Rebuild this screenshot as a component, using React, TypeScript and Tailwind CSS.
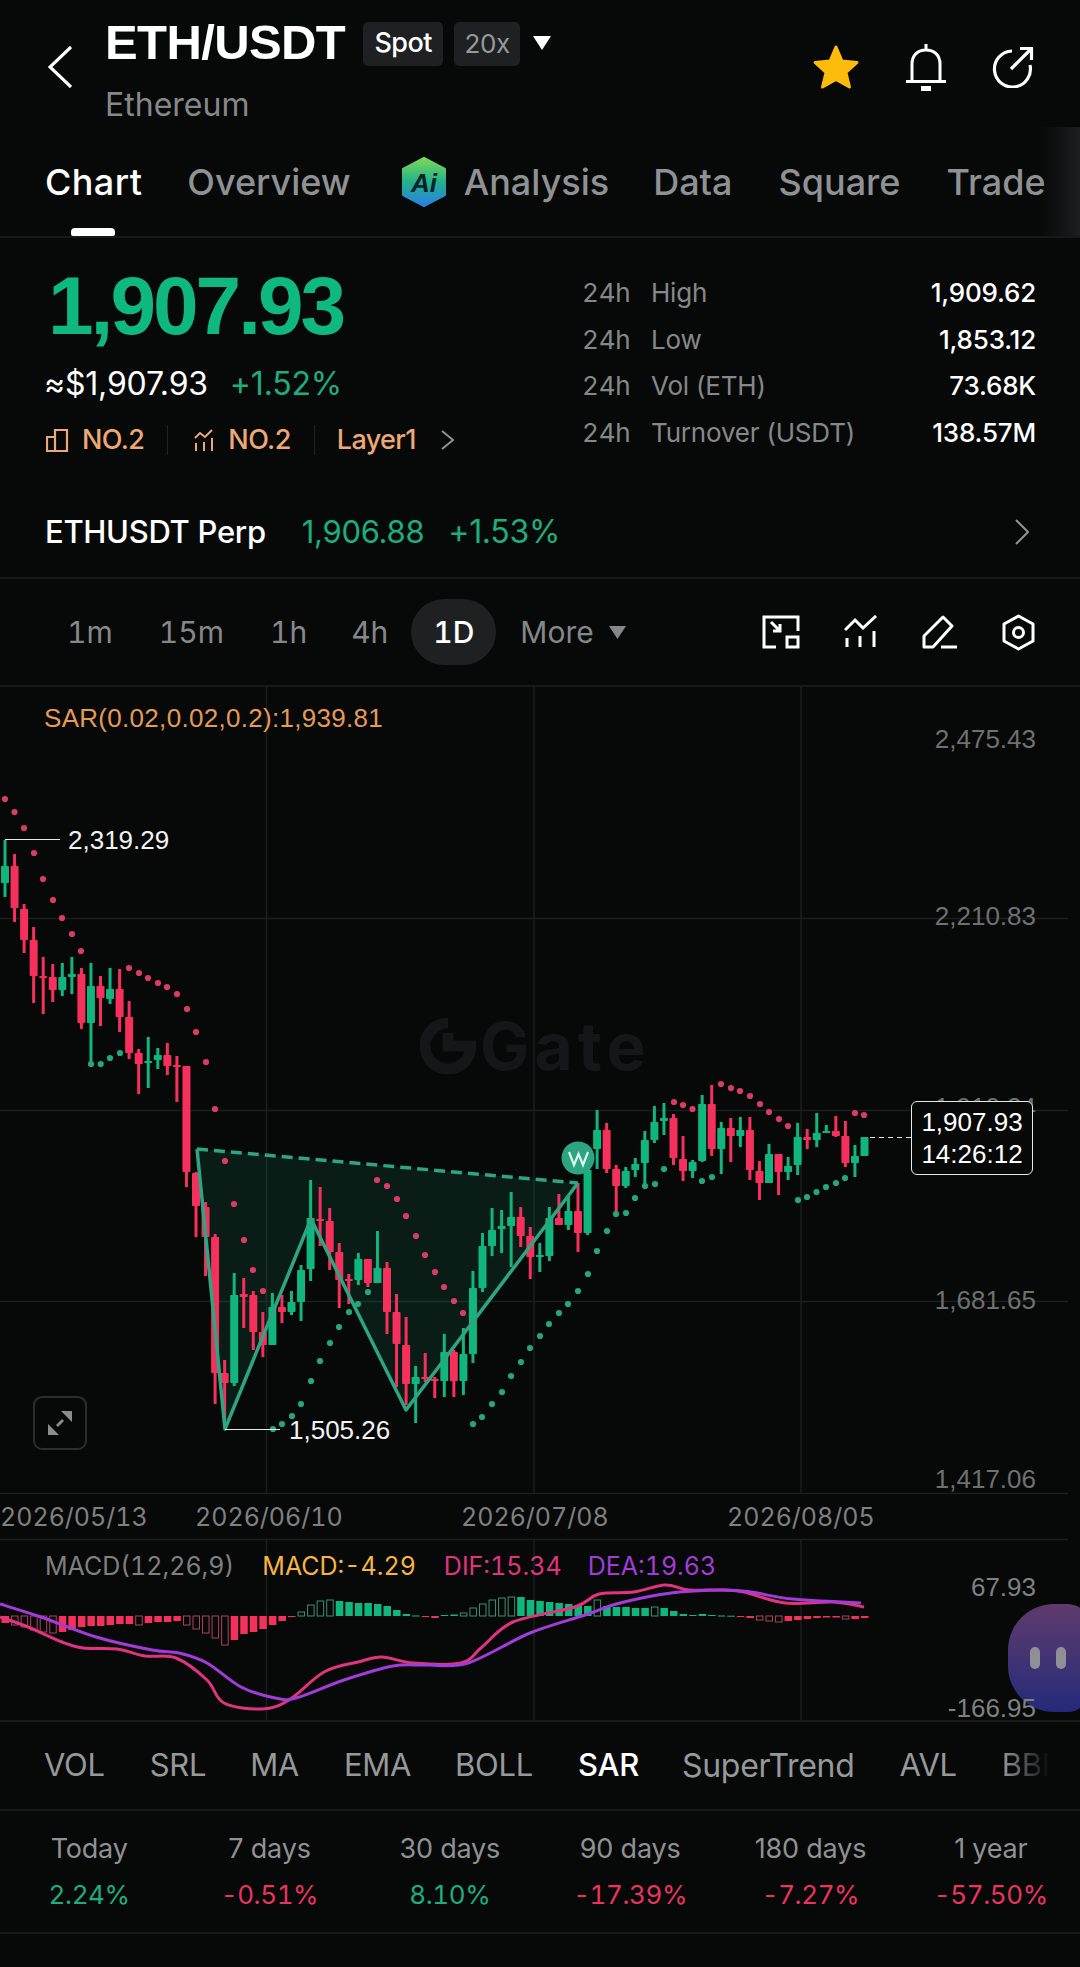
import { Fragment } from "react";

const UP = "#10b67e";
const DOWN = "#f6305c";

// wickTop, bodyTop, bodyBottom, wickBottom, 1 = green
const CANDLES: number[][] = [
  [840, 866, 883, 897, 1], [854, 866, 908, 922, 0], [904, 909, 940, 953, 0], [927, 940, 976, 1003, 0],
  [957, 976, 977, 1014, 0], [964, 977, 990, 1002, 0], [963, 977, 990, 996, 1], [957, 974, 977, 994, 1],
  [968, 974, 1023, 1029, 0], [963, 986, 1023, 1064, 1], [976, 986, 998, 1026, 0], [968, 989, 999, 1004, 1],
  [969, 989, 1017, 1032, 0], [1001, 1017, 1053, 1059, 0], [1049, 1053, 1064, 1094, 0], [1037, 1061, 1063, 1088, 1],
  [1048, 1055, 1060, 1069, 1], [1043, 1055, 1066, 1075, 0], [1056, 1065, 1067, 1102, 0], [1066, 1066, 1172, 1187, 0],
  [1172, 1173, 1206, 1237, 0], [1202, 1207, 1237, 1276, 0], [1234, 1237, 1373, 1404, 0], [1360, 1373, 1383, 1420, 0],
  [1273, 1295, 1383, 1386, 1], [1278, 1294, 1297, 1328, 0], [1291, 1295, 1332, 1350, 0], [1312, 1332, 1345, 1357, 0],
  [1293, 1307, 1345, 1345, 1], [1295, 1307, 1312, 1323, 0], [1291, 1302, 1312, 1315, 1], [1265, 1270, 1302, 1321, 1],
  [1180, 1218, 1269, 1281, 1], [1187, 1219, 1221, 1246, 0], [1208, 1221, 1252, 1270, 0], [1243, 1252, 1280, 1308, 0],
  [1274, 1279, 1281, 1304, 0], [1253, 1259, 1280, 1285, 1], [1259, 1259, 1283, 1287, 0], [1231, 1268, 1283, 1283, 1],
  [1262, 1268, 1312, 1334, 0], [1294, 1312, 1344, 1387, 0], [1317, 1345, 1384, 1405, 0], [1366, 1377, 1384, 1423, 1],
  [1353, 1377, 1379, 1382, 0], [1377, 1379, 1381, 1398, 0], [1334, 1352, 1381, 1397, 1], [1350, 1352, 1381, 1397, 0],
  [1328, 1354, 1381, 1395, 1], [1271, 1288, 1354, 1363, 1], [1233, 1246, 1288, 1292, 1], [1208, 1230, 1246, 1256, 1],
  [1210, 1226, 1229, 1253, 1], [1192, 1217, 1226, 1267, 1], [1207, 1217, 1236, 1247, 0], [1227, 1236, 1257, 1279, 0],
  [1243, 1255, 1257, 1272, 1], [1207, 1218, 1256, 1261, 1], [1194, 1218, 1225, 1225, 0], [1195, 1211, 1225, 1230, 1],
  [1183, 1211, 1233, 1252, 0], [1163, 1170, 1233, 1235, 1], [1110, 1130, 1149, 1169, 1], [1123, 1130, 1169, 1173, 0],
  [1165, 1169, 1186, 1213, 0], [1167, 1171, 1186, 1188, 1], [1158, 1164, 1170, 1177, 1], [1131, 1140, 1163, 1185, 1],
  [1106, 1122, 1140, 1143, 1], [1103, 1118, 1121, 1135, 1], [1114, 1118, 1158, 1165, 0], [1136, 1159, 1171, 1181, 0],
  [1160, 1162, 1171, 1178, 1], [1095, 1104, 1161, 1162, 1], [1085, 1104, 1149, 1156, 0], [1122, 1128, 1149, 1174, 1],
  [1118, 1128, 1136, 1162, 0], [1117, 1130, 1136, 1147, 1], [1117, 1130, 1170, 1180, 0], [1161, 1171, 1183, 1200, 0],
  [1144, 1154, 1183, 1183, 1], [1154, 1154, 1172, 1195, 0], [1157, 1166, 1172, 1180, 1], [1123, 1137, 1165, 1175, 1],
  [1129, 1137, 1140, 1149, 0], [1113, 1133, 1140, 1147, 1], [1125, 1131, 1132, 1133, 1], [1116, 1131, 1136, 1137, 0],
  [1121, 1136, 1163, 1167, 0], [1145, 1156, 1163, 1177, 1], [1137, 1137, 1156, 1156, 1],
];

const RED_DOTS = [
  [5, 799], [14.5, 812], [24, 828], [34, 853], [43, 879], [53, 900], [62, 918], [72, 934], [81, 951],
  [129, 968], [139, 973], [148, 978], [158, 983], [167, 987], [177, 994], [187, 1009], [196, 1032], [206, 1062],
  [215, 1109], [225, 1161], [234, 1204], [244, 1240], [253, 1270], [263, 1291],
  [377, 1180], [387, 1186], [397, 1199], [406, 1216], [416, 1236], [425, 1255], [435, 1272], [444, 1287], [454, 1301], [463, 1313],
  [674, 1102], [683, 1105], [692.5, 1109],
  [721, 1084], [731, 1088], [740, 1091], [750, 1096], [760, 1104], [769, 1112], [779, 1119], [788, 1126],
  [855, 1113], [864, 1115],
];

const GREEN_DOTS = [
  [91, 1064], [100.7, 1064], [110, 1058], [120, 1053],
  [273, 1429], [282, 1424], [292, 1416], [301, 1404], [311, 1381], [320, 1361], [330, 1343], [339, 1327], [349, 1312], [358, 1304], [368, 1292],
  [473, 1424], [482, 1417], [492, 1404], [502, 1392], [511, 1376], [521, 1362], [530, 1348], [540, 1336], [549, 1324], [559, 1313], [568, 1304], [578, 1291], [588, 1274], [597, 1251],
  [607, 1231], [616, 1214], [626, 1213], [635, 1198], [645, 1186], [655, 1184], [664, 1169],
  [702, 1181], [712, 1177],
  [798, 1200], [807, 1197], [816.5, 1192], [826, 1187], [836, 1183], [845, 1178],
];

// macd histogram, px above / below the zero line
const HIST = [
  -7, -9, -11, -14, -16, -17, -16, -14, -11, -10, -10, -9, -8, -8, -9, -7, -6, -6, -5, -9, -13, -17, -22, -29, -24, -18, -16, -13, -9, -5, -1,
  4, 11, 15, 16, 15, 14, 13, 13, 12, 10, 6, 2, 0.5, -1, -2, 1, 1.5, 3, 8, 12, 16, 18, 19, 19, 16, 15, 14, 13, 12, 11, 10, 16, 10, 9, 9, 8, 8, 9, 8, 5, 2, 1, 2, 1, 0.5, 0.3,
  -1, -2, -4, -5, -6, -5, -4, -3, -2, -1.5, -1.5, -3, -3, -2,
];

const DIF = [[0, 1617], [28, 1627], [62, 1642], [83, 1648], [117, 1649], [145, 1656], [176, 1658], [207, 1680], [224, 1703], [262, 1709], [289, 1700], [324, 1672], [358, 1662], [382, 1657], [413, 1663], [461, 1663], [482, 1647], [513, 1622], [575, 1607], [599, 1594], [634, 1592], [665, 1585], [689, 1590], [723, 1590], [744, 1592], [785, 1603], [833, 1602], [864, 1607]];
const DEA = [[0, 1604], [41, 1617], [96, 1637], [152, 1650], [179, 1653], [207, 1663], [241, 1687], [275, 1698], [296, 1698], [344, 1680], [393, 1666], [427, 1665], [468, 1663], [530, 1633], [585, 1615], [620, 1603], [671, 1593], [723, 1590], [751, 1592], [792, 1599], [861, 1603]];

// catmull-rom through the points, the real lines are smooth
function smooth(pts: number[][]) {
  let d = `M${pts[0][0]} ${pts[0][1]}`;
  for (let i = 0; i < pts.length - 1; i++) {
    const p0 = pts[Math.max(i - 1, 0)];
    const p1 = pts[i];
    const p2 = pts[i + 1];
    const p3 = pts[Math.min(i + 2, pts.length - 1)];
    const c1x = p1[0] + (p2[0] - p0[0]) / 6;
    const c1y = p1[1] + (p2[1] - p0[1]) / 6;
    const c2x = p2[0] - (p3[0] - p1[0]) / 6;
    const c2y = p2[1] - (p3[1] - p1[1]) / 6;
    d += `C${c1x} ${c1y} ${c2x} ${c2y} ${p2[0]} ${p2[1]}`;
  }
  return d;
}

function Chart() {
  return (
    <svg className="absolute inset-0" width={1080} height={1033} viewBox="0 687 1080 1033" fill="none">
      {/* grid */}
      {[918, 1110, 1301, 1493, 1539].map((y) => (
        <line key={y} x1={0} x2={1068} y1={y + 0.5} y2={y + 0.5} stroke="#1b1d1e" strokeWidth={1.5} />
      ))}
      {[266.5, 534, 801].map((x) => (
        <Fragment key={x}>
          <line x1={x} x2={x} y1={687} y2={1493} stroke="#1b1d1e" strokeWidth={1.5} />
          <line x1={x} x2={x} y1={1539} y2={1720} stroke="#1b1d1e" strokeWidth={1.5} />
        </Fragment>
      ))}

      {/* w pattern fill */}
      <polygon points="197,1149 225,1429 311,1219 406,1410 578,1183" fill="#15a878" fillOpacity={0.13} />

      {/* candles */}
      {CANDLES.map((c, i) => {
        const x = 5 + i * 9.55;
        const color = c[4] ? UP : DOWN;
        return (
          <g key={i} fill={color}>
            <rect x={x - 1.5} y={c[0]} width={3} height={c[3] - c[0]} />
            <rect x={x - 4} y={c[1]} width={8} height={Math.max(c[2] - c[1], 2)} rx={0.8} />
          </g>
        );
      })}

      {/* sar */}
      {RED_DOTS.map(([x, y]) => (
        <circle key={`r${x}`} cx={x} cy={y} r={3.1} fill="#dc3a68" />
      ))}
      {GREEN_DOTS.map(([x, y]) => (
        <circle key={`g${x}`} cx={x} cy={y} r={3.1} fill="#22a87c" />
      ))}

      {/* w pattern lines */}
      <polyline points="197,1149 225,1429 311,1219 406,1410 578,1183" stroke="#2da582" strokeWidth={3.5} strokeLinejoin="round" />
      <line x1={197} y1={1149} x2={578} y2={1183} stroke="#2da582" strokeWidth={3.5} strokeDasharray="11 6" />
      <circle cx={578} cy={1158} r={16.5} fill="#2da582" />
      <polyline points="569,1152 574,1165 578.5,1154 583,1165 588,1152" stroke="#dff7ee" strokeWidth={2.2} />

      {/* high / low leaders */}
      <line x1={5} x2={60} y1={839.5} y2={839.5} stroke="#e8e8e8" strokeWidth={1.2} />
      <line x1={225} x2={280} y1={1429.5} y2={1429.5} stroke="#e8e8e8" strokeWidth={1.2} />
      <line x1={870} x2={911} y1={1137.5} y2={1137.5} stroke="#e8e8e8" strokeWidth={1.2} strokeDasharray="5 4" />

      {/* macd */}
      {HIST.map((v, i) => {
        const x = 5 + i * 9.55;
        const color = v > 0 ? "#10b67e" : "#f6305c";
        const hollow = i > 0 && Math.abs(v) > Math.abs(HIST[i - 1]) && Math.abs(v) > 2;
        const y = v > 0 ? 1616 - v : 1616;
        const h = Math.max(Math.abs(v), 1);
        return hollow ? (
          <rect key={i} x={x - 3} y={y} width={6.5} height={h} stroke={v > 0 ? "#3d8f70" : "#a8455f"} strokeWidth={1} />
        ) : (
          <rect key={i} x={x - 3.5} y={y} width={7.5} height={h} fill={color} />
        );
      })}
      <path d={smooth(DIF)} stroke="#e0347f" strokeWidth={3} />
      <path d={smooth(DEA)} stroke="#a23cd8" strokeWidth={3} />
    </svg>
  );
}

function PeriodIcons() {
  return (
    <div className="flex items-center gap-[44px]">
      <svg width={38} height={34} viewBox="0 0 38 34" fill="none" stroke="white" strokeWidth={3}>
        <path d="M14 32H2V2H36V16" />
        <rect x={25} y={22} width={11} height={10} />
        <path d="M9 7L18 16M18 9V16H11" />
      </svg>
      <svg width={34} height={34} viewBox="0 0 34 34" fill="none" stroke="white" strokeWidth={3}>
        <path d="M1 15L11 5L19 13L32 1" />
        <path d="M3 23V32M16 21V32M30 16V32" />
      </svg>
      <svg width={36} height={34} viewBox="0 0 36 34" fill="none" stroke="white" strokeWidth={3} strokeLinejoin="round">
        <path d="M2 21L21 2L30 11L11 32H2Z" />
        <path d="M19 32H35" />
      </svg>
      <svg width={33} height={37} viewBox="0 0 33 37" fill="none" stroke="white" strokeWidth={3} strokeLinejoin="round">
        <path d="M16.5 2L31 10V27L16.5 35L2 27V10Z" />
        <circle cx={16.5} cy={18.5} r={5} />
      </svg>
    </div>
  );
}

export default function App() {
  return (
    <div className="w-[1080px] h-[1967px] overflow-hidden bg-[#070808] text-white font-['Inter','Noto_Sans',sans-serif]">
      {/* header */}
      <div className="h-[127px] flex pl-[48px] pr-[46px]">
        <svg className="mt-[46px]" width={24} height={42} viewBox="0 0 24 42" fill="none" stroke="white" strokeWidth={3.2}>
          <path d="M23 1L2 21L23 41" />
        </svg>
        <div className="ml-[33px] flex-1">
          <div className="flex items-center h-[66px] pt-[18px]">
            <span className="font-['Liberation_Sans',sans-serif] font-bold text-[49px] tracking-[-0.6px] leading-none">ETH/USDT</span>
            <span className="ml-[18px] mt-[3px] h-[44px] w-[80px] flex items-center justify-center rounded-[5px] bg-[#1e2021] text-[27px] font-medium tracking-[-0.5px]">Spot</span>
            <span className="ml-[11px] mt-[3px] h-[44px] w-[66px] flex items-center justify-center rounded-[5px] bg-[#1e2021] text-[26px] text-[#96999b] tracking-[-0.3px]">20x</span>
            <svg className="ml-[13px] mt-[2px]" width={18} height={14} viewBox="0 0 18 14">
              <path d="M0 0H18L9 14Z" fill="white" />
            </svg>
          </div>
          <div className="mt-[21px] text-[32px] leading-[36px] text-[#85888a]">Ethereum</div>
        </div>
        <div className="flex items-center gap-[46px] h-[134px]">
          <svg width={48} height={46} viewBox="0 0 48 46">
            <path d="M24 3L30 17L45 18.5L34 28.5L37.5 43L24 35.500L10.500 43L14 28.500L3 18.500L18 17Z" fill="#fdbb0b" stroke="#fdbb0b" strokeWidth={3} strokeLinejoin="round" />
          </svg>
          <svg width={40} height={47} viewBox="0 0 40 47" fill="none" stroke="white" strokeWidth={3}>
            <path d="M20 0V6M6 37V20C6 11 12 6 20 6C28 6 34 11 34 20V37" />
            <path d="M0 37.500H40" />
            <rect x={15} y={42} width={10} height={5} fill="white" stroke="none" />
          </svg>
          <svg width={42} height={42} viewBox="0 0 42 42" fill="none" stroke="white" strokeWidth={3.2}>
            <path d="M38 19A18 18 0 1 1 20 5" />
            <path d="M19 23L39 3M28 2.500H39.500V14" />
          </svg>
        </div>
      </div>

      {/* tabs */}
      <div className="relative h-[111px] border-b-2 border-[#17191a] text-[36px] font-medium text-[#8f9294]">
        <div className="flex items-center h-[110px] pl-[45px] whitespace-nowrap">
          <span className="text-white tracking-[0.4px]">Chart</span>
          <span className="ml-[45px]">Overview</span>
          <svg className="ml-[50px] mr-[17px]" width={46} height={50} viewBox="0 0 46 50">
            <defs>
              <linearGradient id="aiGrad" x1="0" y1="0" x2="0" y2="1">
                <stop offset="0" stopColor="#7bd957" />
                <stop offset="0.5" stopColor="#22b18a" />
                <stop offset="1" stopColor="#2a7fe8" />
              </linearGradient>
            </defs>
            <path d="M23 1L44 12V38L23 49L2 38V12Z" fill="url(#aiGrad)" stroke="url(#aiGrad)" strokeWidth={2} strokeLinejoin="round" />
            <text x={23} y={35} textAnchor="middle" fontFamily="'Liberation Sans',sans-serif" fontWeight={700} fontStyle="italic" fontSize={26} fill="#06222a">Ai</text>
          </svg>
          <span>Analysis</span>
          <span className="ml-[44px]">Data</span>
          <span className="ml-[46px]">Square</span>
          <span className="ml-[46px]">Trade</span>
        </div>
        <div className="absolute left-[71px] bottom-0 w-[44px] h-[8px] rounded-t-[4px] rounded-b-[2px] bg-white" />
        <div className="absolute right-0 top-0 bottom-0 w-[40px] bg-gradient-to-r from-transparent to-[#1c1e1f]" />
      </div>

      {/* price block */}
      <div className="h-[249px] flex justify-between pl-[45px] pr-[44px]">
        <div>
          <div className="mt-[28px] ml-[3px] font-['Liberation_Sans',sans-serif] font-bold text-[82px] leading-[80px] tracking-[-3px] text-[#0fb87f]">1,907.93</div>
          <div className="mt-[20px] -ml-[1px] flex items-center text-[32px] leading-[36px] tracking-[-0.2px]">
            <span>≈$1,907.93</span>
            <span className="ml-[22px] text-[#1cae7e]">+1.52%</span>
          </div>
          <div className="mt-[22px] flex items-center text-[27px] leading-[32px] font-medium text-[#eda876] tracking-[-0.6px]">
            <svg className="ml-[1px]" width={23} height={23} viewBox="0 0 23 23" fill="none" stroke="#eda876" strokeWidth={2.2}>
              <path d="M9 22V8H1V22H21V1H9V8" />
            </svg>
            <span className="ml-[13px]">NO.2</span>
            <span className="ml-[23px] w-[1px] h-[30px] bg-[#1f2122]" />
            <svg className="ml-[26px]" width={20} height={22} viewBox="0 0 20 22" fill="none" stroke="#eda876" strokeWidth={2}>
              <path d="M1 9L6 4L11 8L18 1" />
              <path d="M2 14V22M10 13V22M18 9V22" />
            </svg>
            <span className="ml-[14px]">NO.2</span>
            <span className="ml-[23px] w-[1px] h-[30px] bg-[#1f2122]" />
            <span className="ml-[22px]">Layer1</span>
            <svg className="ml-[25px]" width={13} height={20} viewBox="0 0 13 20" fill="none" stroke="#8f9294" strokeWidth={2}>
              <path d="M1 1L12 10L1 19" />
            </svg>
          </div>
        </div>
        <div className="w-[454px] mt-[32px] text-[26px] leading-[46.500px] tracking-[-0.2px]">
          {[
            ["High", "1,909.62"],
            ["Low", "1,853.12"],
            ["Vol (ETH)", "73.68K"],
            ["Turnover (USDT)", "138.57M"],
          ].map(([label, value]) => (
            <div key={label} className="flex">
              <span className="w-[69px] text-[#85888a] tabular-nums">24h</span>
              <span className="flex-1 text-[#85888a]">{label}</span>
              <span className="font-medium">{value}</span>
            </div>
          ))}
        </div>
      </div>

      {/* perp row */}
      <div className="h-[90px] pl-[45px] pr-[51px] flex items-center text-[31px] tracking-[-0.3px]">
        <span className="font-medium">ETHUSDT Perp</span>
        <span className="ml-[36px] text-[#1cae7e]">1,906.88</span>
        <span className="ml-[24px] text-[32px] text-[#1cae7e]">+1.53%</span>
        <svg className="ml-auto" width={14} height={26} viewBox="0 0 14 26" fill="none" stroke="#8f9294" strokeWidth={2}>
          <path d="M1 1L13 13L1 25" />
        </svg>
      </div>

      {/* period toolbar */}
      <div className="h-[110px] border-y-2 border-[#17191a] flex items-center pl-[67px] pr-[45px] text-[30px] text-[#85888a] tabular-nums">
        <span>1m</span>
        <span className="ml-[46px]">15m</span>
        <span className="ml-[46px]">1h</span>
        <span className="ml-[44px]">4h</span>
        <span className="ml-[23px] w-[85px] h-[66px] rounded-[33px] bg-[#1e2021] flex items-center justify-center text-white font-medium">1D</span>
        <span className="ml-[24px]">More</span>
        <svg className="ml-[15px]" width={17} height={13} viewBox="0 0 17 13">
          <path d="M0 0H17L8.500 13Z" fill="#85888a" />
        </svg>
        <div className="ml-auto">
          <PeriodIcons />
        </div>
      </div>

      {/* chart + macd */}
      <div className="relative h-[1033px] font-['Liberation_Sans',sans-serif] text-[26px] leading-[30px]">
        {/* watermark */}
        <div className="absolute left-[420px] top-[324px] flex items-center text-[#151617] font-['Inter',sans-serif] font-bold text-[66px] leading-[70px] tracking-[5px]">
          <svg width={56} height={56} viewBox="0 0 56 56" fill="none">
            <path d="M28 5A23 23 0 1 0 51 28H28V15" stroke="#151617" strokeWidth={11} />
          </svg>
          <span className="ml-[4px]">Gate</span>
        </div>

        <Chart />

        {/* floating assistant */}
        <div className="absolute left-[1008px] top-[917px] w-[80px] h-[108px] rounded-l-[46px] rounded-r-[20px] bg-gradient-to-b from-[#5f3a6d] to-[#25297a] flex items-center gap-[16px] pl-[22px]">
          <span className="w-[10px] h-[22px] rounded-full bg-[#8f8f95]" />
          <span className="w-[10px] h-[22px] rounded-full bg-[#8f8f95]" />
        </div>

        <span className="absolute left-[44px] top-[16px] text-[#e59a55] tracking-[0.3px]">SAR(0.02,0.02,0.2):1,939.81</span>
        <span className="absolute right-[44px] top-[37px] text-[#6e7071]">2,475.43</span>
        <span className="absolute right-[44px] top-[214px] text-[#6e7071]">2,210.83</span>
        <span className="absolute right-[44px] top-[405px] text-[#6e7071]">1,910.24</span>
        <span className="absolute right-[44px] top-[598px] text-[#6e7071]">1,681.65</span>
        <span className="absolute right-[44px] top-[777px] text-[#6e7071]">1,417.06</span>

        <span className="absolute left-[68px] top-[138px] text-[#f2f2f2]">2,319.29</span>
        <span className="absolute left-[289px] top-[728px] text-[#f2f2f2]">1,505.26</span>

        <div className="absolute left-[911px] top-[414px] w-[122px] h-[74px] rounded-[6px] border border-[#e8e8e8] bg-[#070808] flex flex-col items-center justify-center leading-[32px] text-white">
          <span>1,907.93</span>
          <span>14:26:12</span>
        </div>

        <div className="absolute left-[33px] top-[709px] w-[54px] h-[54px] rounded-[9px] border-2 border-[#2b2d2e] flex items-center justify-center">
          <svg width={26} height={26} viewBox="0 0 26 26" fill="#8a8c8d">
            <path d="M14 1H25V12Z" />
            <path d="M1 14V25H12Z" />
            <path d="M9 15L15 9L17 11L11 17Z" />
          </svg>
        </div>

        <div className="absolute inset-x-0 top-[815px] font-['Inter',sans-serif] text-[25px] text-[#7e8081] tabular-nums">
          <span className="absolute left-0">2026/05/13</span>
          <span className="absolute left-[195px]">2026/06/10</span>
          <span className="absolute left-[461px]">2026/07/08</span>
          <span className="absolute left-[727px]">2026/08/05</span>
        </div>

        <div className="absolute left-[45px] top-[864px] flex font-['Inter',sans-serif] text-[25px] tabular-nums">
          <span className="text-[#7e8081]">MACD(12,26,9)</span>
          <span className="ml-[28px] text-[#f5b53f]">MACD:-4.29</span>
          <span className="ml-[28px] text-[#e0347f]">DIF:15.34</span>
          <span className="ml-[26px] text-[#a23cd8]">DEA:19.63</span>
        </div>
        <span className="absolute right-[44px] top-[885px] text-[#7e8081]">67.93</span>
        <span className="absolute right-[44px] top-[1006px] text-[#7e8081]">-166.95</span>
      </div>

      {/* indicators */}
      <div className="h-[89px] border-t-2 border-[#17191a] flex items-center pl-[44px] text-[31px] text-[#96999b] tracking-[-0.3px] whitespace-nowrap">
        <span>VOL</span>
        <span className="ml-[45px]">SRL</span>
        <span className="ml-[44px]">MA</span>
        <span className="ml-[45px]">EMA</span>
        <span className="ml-[44px]">BOLL</span>
        <span className="ml-[45px] text-white font-medium">SAR</span>
        <span className="ml-[43px] text-[32px]">SuperTrend</span>
        <span className="ml-[45px]">AVL</span>
        <span className="ml-[45px] bg-gradient-to-r from-[#96999b] to-transparent bg-clip-text text-transparent">BBI</span>
      </div>

      {/* performance */}
      <div className="h-[125px] border-y-2 border-[#17191a] grid grid-cols-6 text-center content-center text-[27px] leading-[46px] tracking-[-0.2px] -mx-[1px]">
        {[
          ["Today", "2.24%", 1],
          ["7 days", "-0.51%", 0],
          ["30 days", "8.10%", 1],
          ["90 days", "-17.39%", 0],
          ["180 days", "-7.27%", 0],
          ["1 year", "-57.50%", 0],
        ].map(([label, value, up]) => (
          <div key={label as string}>
            <div className="text-[#8f9294]">{label}</div>
            <div className={up ? "text-[26px] tracking-[-0.4px] text-[#1cae7e] tabular-nums" : "text-[26px] tracking-[-0.4px] text-[#e8345f] tabular-nums"}>{value}</div>
          </div>
        ))}
      </div>
    </div>
  );
}
